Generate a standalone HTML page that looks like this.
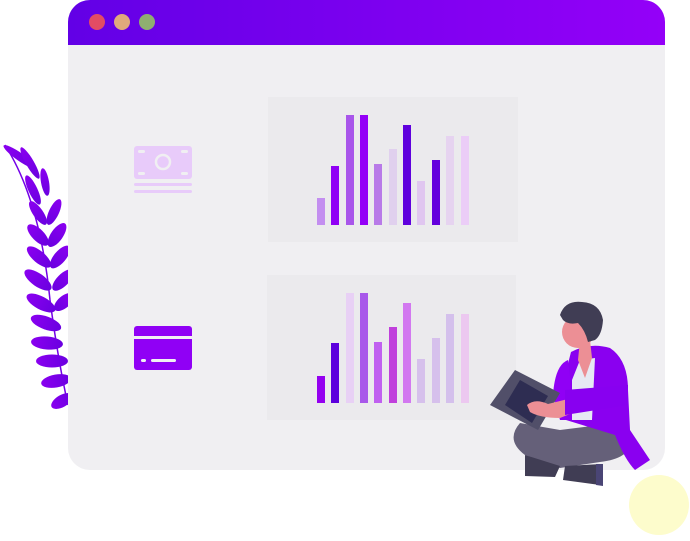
<!DOCTYPE html><html><head><style>body{margin:0;width:690px;height:536px;background:#fff;overflow:hidden}</style></head><body>
<svg width="690" height="536" viewBox="0 0 690 536" xmlns="http://www.w3.org/2000/svg">
<defs><linearGradient id="g" x1="0" x2="1"><stop offset="0" stop-color="#6200e6"/><stop offset="1" stop-color="#9400f8"/></linearGradient>
<linearGradient id="lf" x1="0" x2="1"><stop offset="0" stop-color="#8a00f0"/><stop offset="1" stop-color="#6a00e0"/></linearGradient></defs>
<g fill="url(#lf)">
<path d="M5 145 Q40 200 50 300 Q58 360 68 405" fill="none" stroke="#7400e8" stroke-width="1.5"/>
<ellipse cx="20" cy="157" rx="20" ry="4" transform="rotate(35 20 157)"/>
<ellipse cx="30" cy="163" rx="18" ry="4" transform="rotate(60 30 163)"/>
<ellipse cx="33" cy="190" rx="16" ry="4.5" transform="rotate(65 33 190)"/>
<ellipse cx="45" cy="182" rx="14" ry="4" transform="rotate(80 45 182)"/>
<ellipse cx="38" cy="213" rx="14" ry="5" transform="rotate(55 38 213)"/>
<ellipse cx="54" cy="212" rx="14" ry="5" transform="rotate(115 54 212)"/>
<ellipse cx="38" cy="235" rx="14" ry="6" transform="rotate(45 38 235)"/>
<ellipse cx="57" cy="235" rx="14" ry="6" transform="rotate(125 57 235)"/>
<ellipse cx="39" cy="257" rx="15" ry="6" transform="rotate(40 39 257)"/>
<ellipse cx="60" cy="257" rx="14" ry="6" transform="rotate(130 60 257)"/>
<ellipse cx="38" cy="280" rx="16" ry="6.5" transform="rotate(35 38 280)"/>
<ellipse cx="63" cy="280" rx="14" ry="6" transform="rotate(135 63 280)"/>
<ellipse cx="41" cy="303" rx="16" ry="6.5" transform="rotate(28 41 303)"/>
<ellipse cx="64" cy="302" rx="12" ry="6" transform="rotate(140 64 302)"/>
<ellipse cx="46" cy="323" rx="16" ry="6.5" transform="rotate(20 46 323)"/>
<ellipse cx="47" cy="343" rx="16" ry="6.5" transform="rotate(5 47 343)"/>
<ellipse cx="52" cy="361" rx="16" ry="6.5"/>
<ellipse cx="56" cy="381" rx="15" ry="6.5" transform="rotate(-10 56 381)"/>
<ellipse cx="62" cy="401" rx="12" ry="6" transform="rotate(-30 62 401)"/>
</g>
<rect x="68" y="0" width="597" height="470" rx="22" fill="#f0eff2"/>
<path d="M68 45V22A22 22 0 0 1 90 0H643A22 22 0 0 1 665 22V45Z" fill="url(#g)"/>
<circle cx="97" cy="22" r="8" fill="#e24c64"/><circle cx="122" cy="22" r="8" fill="#e0aa7c"/><circle cx="147" cy="22" r="8" fill="#8fae70"/>
<rect x="268" y="97" width="250" height="145" fill="#ebeaed"/>
<rect x="267" y="275" width="249" height="145" fill="#ebeaed"/>
<g>
<rect x="317" y="198" width="8" height="27" fill="#c38ef0"/><rect x="331" y="166" width="8" height="59" fill="#9000f5"/><rect x="346" y="115" width="8" height="110" fill="#a855ea"/><rect x="360" y="115" width="8" height="110" fill="#9400f7"/><rect x="374" y="164" width="8" height="61" fill="#b87ae8"/><rect x="389" y="149" width="8" height="76" fill="#e0d0ee"/><rect x="403" y="125" width="8" height="100" fill="#5f00dd"/><rect x="417" y="181" width="8" height="44" fill="#e0c6f0"/><rect x="432" y="160" width="8" height="65" fill="#6400dd"/><rect x="446" y="136" width="8" height="89" fill="#e6d3f0"/><rect x="461" y="136" width="8" height="89" fill="#ebcdf7"/>
<rect x="317" y="376" width="8" height="27" fill="#9400f0"/><rect x="331" y="343" width="8" height="60" fill="#5c00dd"/><rect x="346" y="293" width="8" height="110" fill="#e8d0f5"/><rect x="360" y="293" width="8" height="110" fill="#a858ea"/><rect x="374" y="342" width="8" height="61" fill="#c060f0"/><rect x="389" y="327" width="8" height="76" fill="#c040dc"/><rect x="403" y="303" width="8" height="100" fill="#d278f0"/><rect x="417" y="359" width="8" height="44" fill="#d6c0ec"/><rect x="432" y="338" width="8" height="65" fill="#d6c0ec"/><rect x="446" y="314" width="8" height="89" fill="#d4c0ec"/><rect x="461" y="314" width="8" height="89" fill="#ecc8f0"/>
</g>
<rect x="134" y="146" width="58" height="33" rx="3" fill="#e8cbfa"/>
<circle cx="163" cy="162" r="7" fill="none" stroke="#f0eff2" stroke-width="2.5"/>
<rect x="138" y="150" width="7" height="3" rx="1.5" fill="#f0eff2"/><rect x="181" y="150" width="7" height="3" rx="1.5" fill="#f0eff2"/><rect x="138" y="172" width="7" height="3" rx="1.5" fill="#f0eff2"/><rect x="181" y="172" width="7" height="3" rx="1.5" fill="#f0eff2"/>
<rect x="134" y="183" width="58" height="3" rx="1.5" fill="#e8cbfa"/><rect x="134" y="190" width="58" height="3" rx="1.5" fill="#e8cbfa"/>
<rect x="134" y="326" width="58" height="44" rx="3" fill="#9000f5"/><rect x="134" y="336" width="58" height="3" fill="#f0eff2"/>
<rect x="141" y="359" width="5" height="3" rx="1.5" fill="#f0eff2"/><rect x="151" y="359" width="25" height="3" rx="1.5" fill="#f0eff2"/>
<circle cx="659" cy="505" r="30" fill="#fdfccc"/>
<path d="M520 423 Q505 440 525 455 L560 468 L600 462 Q632 458 630 440 Q625 420 600 425 L560 430 Z" fill="#656079"/>
<path d="M525 455 L525 476 L555 477 L560 466 Z" fill="#403d54"/>
<path d="M565 466 L563 480 L600 485 L602 464 Z" fill="#403d54"/>
<path d="M596 464 L603 464 L603 486 L596 485 Z" fill="#4a4575"/>
<path d="M571 352 Q590 342 610 348 Q628 360 628 390 L630 430 Q640 445 650 460 L635 470 Q625 460 615 435 L566 420 L560 395 Z" fill="#8a00f0"/>
<path d="M568 360 Q555 365 553 395 L560 420 L575 420 Z" fill="#9000f5"/>
<path d="M580 360 L595 358 L592 420 L572 420 L572 380 Z" fill="#e6e9f3"/>
<path d="M580 340 L590 340 L592 358 L585 378 L578 360 Z" fill="#ec8f95"/>
<circle cx="578" cy="332" r="16" fill="#ec8f95"/>
<path d="M560 315 Q565 300 582 302 Q600 303 603 320 Q602 335 595 340 L588 342 Q585 330 578 323 Q568 325 563 320 Z" fill="#403d54"/>
<path d="M490 405 L515 370 L560 393 L538 430 Z" fill="#514f69"/>
<path d="M505 405 L520 380 L548 396 L532 423 Z" fill="#2e2d52"/>
<path d="M527 405 Q535 398 548 404 L572 398 L590 393 L600 402 L560 418 Q540 418 530 412 Z" fill="#ec8f95"/>
<path d="M565 390 L628 385 L628 405 L565 415 Z" fill="#8800f0"/>
</svg>
</body></html>
